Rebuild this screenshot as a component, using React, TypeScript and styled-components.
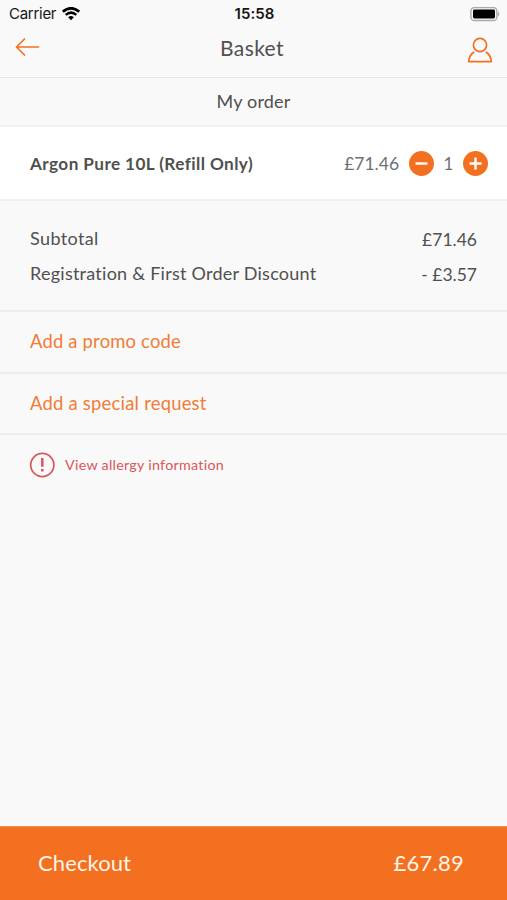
import React from "react";
import styled, { createGlobalStyle } from "styled-components";

const GlobalStyle = createGlobalStyle`
  * { box-sizing: border-box; }
  body { margin: 0; background: #f9f9f9; }
`;

const orange = "#f37021";

const Screen = styled.main`
  width: 507px;
  height: 900px;
  display: flex;
  flex-direction: column;
  background: #f9f9f9;
  color: #505050;
  font-family: Lato, sans-serif;
  overflow: hidden;
`;

const Label = styled.span<{ $size: number; $spacing?: number; $weight?: number; $color?: string; $drop?: number; $lift?: number }>`
  display: block;
  margin: 0;
  font-size: ${(p) => p.$size}px;
  letter-spacing: ${(p) => p.$spacing ?? 0}px;
  font-weight: ${(p) => p.$weight ?? 400};
  color: ${(p) => p.$color ?? "inherit"};
  padding-top: ${(p) => p.$drop ?? 0}px;
  padding-bottom: ${(p) => p.$lift ?? 0}px;
  line-height: 24px;
  white-space: nowrap;
`;

const StatusBar = styled.div`
  height: 28px;
  padding: 0 7px 0 9px;
  display: grid;
  grid-template-columns: 1fr auto 1fr;
  align-items: center;
  color: #161616;
  font: 15px/28px Inter, sans-serif;
`;

const Carrier = styled.div`
  display: flex;
  align-items: center;
  gap: 6px;
  letter-spacing: -0.28px;
`;

const Clock = styled.strong`
  font-weight: 600;
  letter-spacing: 0.1px;
`;

const Battery = styled.svg`
  justify-self: end;
`;

const NavBar = styled.header`
  height: 50px;
  padding: 0 14px 9px;
  display: grid;
  grid-template-columns: 1fr auto 1fr;
  align-items: center;
  border-bottom: 1px solid #e6e6e6;
`;

const PageTitle = styled(Label)`
  padding-right: 3px;
`;

const IconButton = styled.button<{ $end?: boolean }>`
  display: flex;
  justify-self: ${(p) => (p.$end ? "end" : "start")};
  padding: ${(p) => (p.$end ? "3px 0 0" : "0 0 3px")};
  border: 0;
  background: none;
  color: ${orange};
`;

const SectionTitle = styled.div`
  height: 49px;
  display: flex;
  justify-content: center;
  align-items: center;
  border-bottom: 2px solid #f1f1f1;
`;

const ItemRow = styled.section`
  height: 74px;
  padding: 0 19px 0 30px;
  display: flex;
  align-items: center;
  justify-content: space-between;
  background: #fff;
  border-bottom: 2px solid #f0f0f0;
`;

const Quantity = styled.div`
  display: flex;
  align-items: center;
  gap: 9.7px;
`;

const RoundButton = styled.button`
  width: 25px;
  height: 25px;
  padding: 0;
  display: grid;
  place-items: center;
  border: 0;
  border-radius: 50%;
  background: ${orange};
`;

const Totals = styled.section`
  height: 111px;
  padding: 25px 30px 0;
  display: flex;
  flex-direction: column;
  gap: 11px;
  border-bottom: 2px solid #ededed;
`;

const TotalRow = styled.div`
  height: 24px;
  display: flex;
  justify-content: space-between;
`;

const ActionRow = styled.button<{ $height: number }>`
  height: ${(p) => p.$height}px;
  padding: 0 30px;
  display: flex;
  align-items: center;
  border: 0;
  border-bottom: 2px solid #ededed;
  background: none;
  font-family: inherit;
  color: #f07c35;
`;

const Allergy = styled.div`
  flex: 1;
  padding: 17px 29px;
  display: flex;
  align-items: flex-start;
  gap: 10px;
  color: #d8575b;
`;

const Checkout = styled.button`
  height: 74px;
  padding: 0 43px 0 38px;
  display: flex;
  align-items: center;
  justify-content: space-between;
  border: 0;
  border-top: 1px solid #f58e50;
  background: ${orange};
  color: #fff4e6;
  font-family: inherit;
`;

export default function App() {
  return (
    <>
      <GlobalStyle />
      <Screen>
        <StatusBar>
          <Carrier>
            Carrier
            <svg width="18" height="14" viewBox="0 0 18 14" fill="none" stroke="#000">
              <path d="M.8 4.7Q9-2.2 17.2 4.7" strokeWidth="2.7" />
              <path d="M3.7 7.9Q9 3.3 14.3 7.9" strokeWidth="2.5" />
              <path d="M6.2 10.3Q9 7.9 11.8 10.3L9 13.2Z" fill="#000" stroke="none" />
            </svg>
          </Carrier>
          <Clock>15:58</Clock>
          <Battery width="30" height="15" viewBox="0 0 30 15">
            <rect x=".9" y=".5" width="26" height="13" rx="3.6" fill="#f9f9f9" stroke="#aaa" strokeWidth="1.4" />
            <rect x="3" y="2.5" width="22" height="9" rx="1.4" fill="#000" />
            <path d="M28.2 4.8Q30.2 7 28.2 9.2Z" fill="#aaa" stroke="#aaa" strokeWidth=".5" />
          </Battery>
        </StatusBar>
        <NavBar>
          <IconButton aria-label="Back">
            <svg width="26" height="20" viewBox="0 0 26 20" fill="none" stroke="currentColor" strokeWidth="1.7" strokeLinecap="round" strokeLinejoin="round">
              <path d="M10.5 2L2.5 10L10.5 18M2.5 10H24.5" />
            </svg>
          </IconButton>
          <PageTitle as="h1" $size={21} $spacing={0.4} $lift={1}>Basket</PageTitle>
          <IconButton $end aria-label="Account">
            <svg width="26" height="26" viewBox="0 0 26 26" fill="none" stroke="currentColor" strokeWidth="1.7" strokeLinejoin="round">
              <circle cx="13" cy="8" r="6.6" />
              <path d="M7.3 15.1C4.3 16.4 2.2 19.6 1.7 24.6H24.3C23.8 19.6 21.7 16.4 18.7 15.1" />
            </svg>
          </IconButton>
        </NavBar>
        <SectionTitle>
          <Label as="h2" $size={18} $spacing={0.2} $lift={2}>My order</Label>
        </SectionTitle>
        <ItemRow>
          <Label $size={17.2} $weight={700} $spacing={0.4} $drop={2}>Argon Pure 10L (Refill Only)</Label>
          <Quantity>
            <Label $size={17.5} $color="#6c7176" $drop={2}>£71.46</Label>
            <RoundButton aria-label="Decrease">
              <svg width="13" height="13" stroke="#fff" strokeWidth="2.4"><path d="M.5 6.5H12.5" /></svg>
            </RoundButton>
            <Label $size={17} $color="#6c7176" $drop={2}>1</Label>
            <RoundButton aria-label="Increase">
              <svg width="13" height="13" stroke="#fff" strokeWidth="2.4"><path d="M.5 6.5H12.5M6.5 .5V12.5" /></svg>
            </RoundButton>
          </Quantity>
        </ItemRow>
        <Totals>
          <TotalRow>
            <Label $size={18} $spacing={0.38}>Subtotal</Label>
            <Label $size={17.5} $drop={2}>£71.46</Label>
          </TotalRow>
          <TotalRow>
            <Label $size={18} $spacing={0.25}>Registration &amp; First Order Discount</Label>
            <Label $size={17.5} $drop={2}>- £3.57</Label>
          </TotalRow>
        </Totals>
        <ActionRow $height={62}>
          <Label $size={18.4} $spacing={0.2} $lift={2}>Add a promo code</Label>
        </ActionRow>
        <ActionRow $height={61}>
          <Label $size={18.4} $spacing={0.24} $lift={2}>Add a special request</Label>
        </ActionRow>
        <Allergy>
          <svg width="26" height="26" viewBox="0 0 26 26" fill="none" stroke="currentColor">
            <circle cx="13.3" cy="13" r="11.6" strokeWidth="1.7" />
            <path d="M13.3 6V14.8M13.3 17V19.6" strokeWidth="2.5" />
          </svg>
          <Label $size={14.3} $spacing={0.27} $drop={1}>View allergy information</Label>
        </Allergy>
        <Checkout>
          <Label $size={22} $spacing={0.1} $lift={2}>Checkout</Label>
          <Label $size={22} $spacing={0.25} $lift={2}>£67.89</Label>
        </Checkout>
      </Screen>
    </>
  );
}
